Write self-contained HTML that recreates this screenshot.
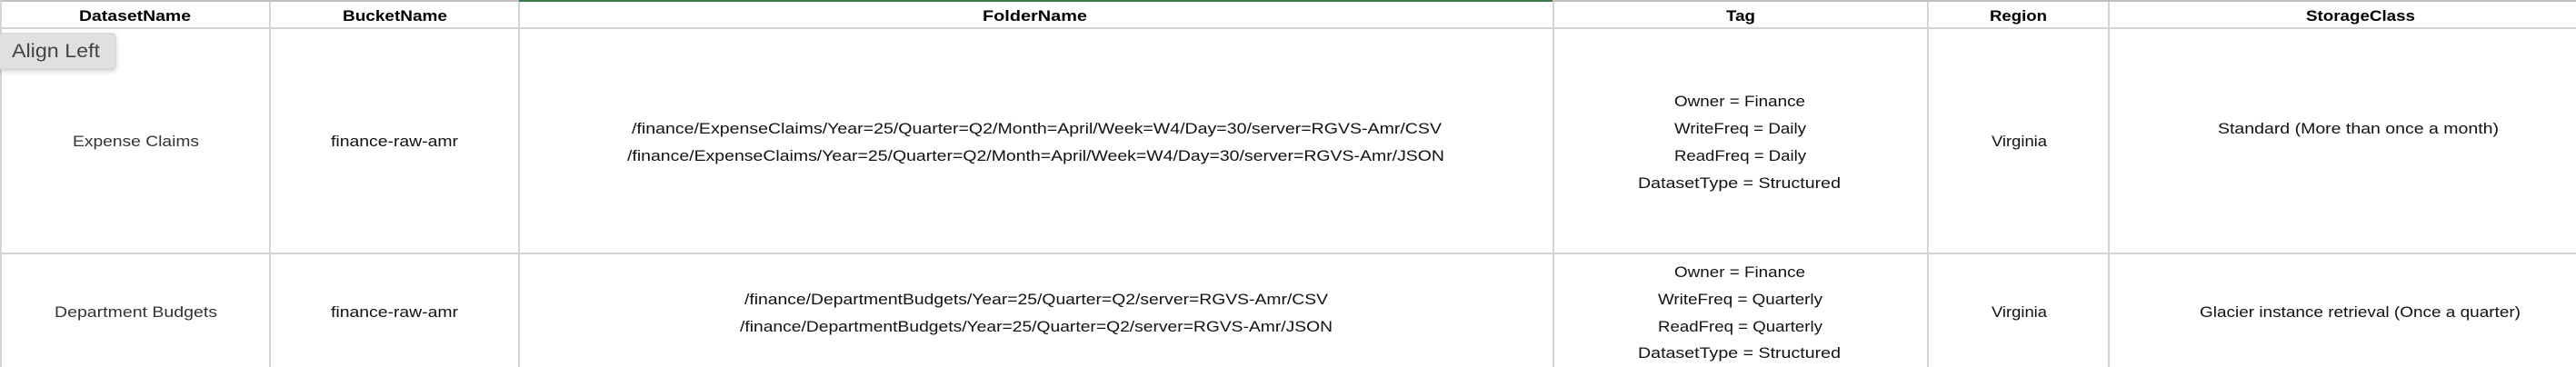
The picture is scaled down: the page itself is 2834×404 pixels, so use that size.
<!DOCTYPE html>
<html><head><meta charset="utf-8"><style>
html,body{margin:0;padding:0;background:#fff;width:2834px;height:404px;overflow:hidden}
svg{display:block}
text{font-family:"Liberation Sans",sans-serif;font-size:17px;fill:#111}
.h{font-weight:bold;font-size:17px;fill:#000}
</style></head><body>
<svg width="2834" height="404" viewBox="0 0 2834 404" xmlns="http://www.w3.org/2000/svg">
<rect width="2834" height="404" fill="#fff"/>
<rect x="0" y="0" width="2834" height="2" fill="#c0c0c0"/>
<rect x="571" y="0" width="1137" height="2" fill="#3c7a4c"/>
<g fill="#d4d4d4">
<rect x="0" y="30" width="2834" height="2"/>
<rect x="0" y="278" width="2834" height="2"/>
<rect x="0" y="0" width="2" height="404"/>
<rect x="296" y="2" width="2" height="402"/>
<rect x="570" y="2" width="2" height="402"/>
<rect x="1708" y="2" width="2" height="402"/>
<rect x="2120" y="2" width="2" height="402"/>
<rect x="2319" y="2" width="2" height="402"/>
</g>
<text class="h" x="87" y="23" textLength="123" lengthAdjust="spacingAndGlyphs">DatasetName</text>
<text class="h" x="377" y="23" textLength="115" lengthAdjust="spacingAndGlyphs">BucketName</text>
<text class="h" x="1081" y="23" textLength="115" lengthAdjust="spacingAndGlyphs">FolderName</text>
<text class="h" x="1899" y="23" textLength="32" lengthAdjust="spacingAndGlyphs">Tag</text>
<text class="h" x="2189" y="23" textLength="63" lengthAdjust="spacingAndGlyphs">Region</text>
<text class="h" x="2537" y="23" textLength="120" lengthAdjust="spacingAndGlyphs">StorageClass</text>

<text x="80" y="161" textLength="139" lengthAdjust="spacingAndGlyphs" style="fill:#333">Expense Claims</text>
<text x="364" y="161" textLength="140" lengthAdjust="spacingAndGlyphs">finance-raw-amr</text>
<text x="695" y="147" textLength="891" lengthAdjust="spacingAndGlyphs">/finance/ExpenseClaims/Year=25/Quarter=Q2/Month=April/Week=W4/Day=30/server=RGVS-Amr/CSV</text>
<text x="690" y="177" textLength="899" lengthAdjust="spacingAndGlyphs">/finance/ExpenseClaims/Year=25/Quarter=Q2/Month=April/Week=W4/Day=30/server=RGVS-Amr/JSON</text>
<text x="1842" y="117" textLength="144" lengthAdjust="spacingAndGlyphs">Owner = Finance</text>
<text x="1842" y="147" textLength="145" lengthAdjust="spacingAndGlyphs">WriteFreq = Daily</text>
<text x="1842" y="177" textLength="145" lengthAdjust="spacingAndGlyphs">ReadFreq = Daily</text>
<text x="1802" y="207" textLength="223" lengthAdjust="spacingAndGlyphs">DatasetType =  Structured</text>
<text x="2191" y="161" textLength="61" lengthAdjust="spacingAndGlyphs">Virginia</text>
<text x="2440" y="147" textLength="309" lengthAdjust="spacingAndGlyphs">Standard (More than once a month)</text>

<text x="60" y="349" textLength="179" lengthAdjust="spacingAndGlyphs" style="fill:#333">Department Budgets</text>
<text x="364" y="349" textLength="140" lengthAdjust="spacingAndGlyphs">finance-raw-amr</text>
<text x="819" y="335" textLength="642" lengthAdjust="spacingAndGlyphs">/finance/DepartmentBudgets/Year=25/Quarter=Q2/server=RGVS-Amr/CSV</text>
<text x="814" y="365" textLength="652" lengthAdjust="spacingAndGlyphs">/finance/DepartmentBudgets/Year=25/Quarter=Q2/server=RGVS-Amr/JSON</text>
<text x="1842" y="305" textLength="144" lengthAdjust="spacingAndGlyphs">Owner = Finance</text>
<text x="1824" y="335" textLength="181" lengthAdjust="spacingAndGlyphs">WriteFreq = Quarterly</text>
<text x="1824" y="365" textLength="181" lengthAdjust="spacingAndGlyphs">ReadFreq = Quarterly</text>
<text x="1802" y="394" textLength="223" lengthAdjust="spacingAndGlyphs">DatasetType =  Structured</text>
<text x="2191" y="349" textLength="61" lengthAdjust="spacingAndGlyphs">Virginia</text>
<text x="2420" y="349" textLength="353" lengthAdjust="spacingAndGlyphs">Glacier instance retrieval (Once a quarter)</text>

<defs><filter id="sh" x="-20%" y="-30%" width="140%" height="180%"><feDropShadow dx="0" dy="2" stdDeviation="3" flood-color="#000" flood-opacity="0.18"/></filter></defs>
<rect x="-4" y="37" width="131" height="39" rx="3" fill="#dfe0e2" stroke="#d0d1d3" stroke-width="1" filter="url(#sh)"/>
<text x="13" y="63" textLength="97" lengthAdjust="spacingAndGlyphs" style="font-size:21px;fill:#444">Align Left</text>
</svg>
</body></html>
